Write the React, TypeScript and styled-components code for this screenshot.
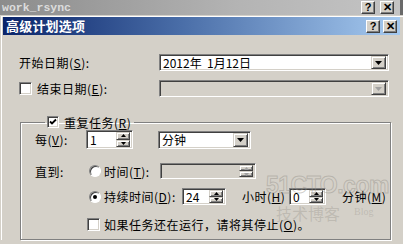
import styled, { createGlobalStyle } from "styled-components";

const GlobalStyle = createGlobalStyle`
    html, body {
        margin: 0;
        padding: 0;
        width: 403px;
        height: 244px;
        overflow: hidden;
        background: #d4d0c8;
    }
    * {
        box-sizing: border-box;
    }
`;

const Screen = styled.div`
    position: relative;
    width: 403px;
    height: 244px;
    overflow: hidden;
    background: #d4d0c8;
    font-family: "Noto Sans CJK SC", "Noto Sans", sans-serif;
    font-size: 12px;
    color: #000;
`;

const BackTitle = styled.div`
    height: 15px;
    display: flex;
    align-items: center;
    padding: 0 6px 0 2px;
    background: linear-gradient(to right, #8c8c8c, #b4b4b4 60%, #c4c4c4);
    border-right: 3px solid #6a6a6a;
`;

const BackTitleText = styled.span`
    flex: 1;
    font-family: "Liberation Mono", "DejaVu Sans Mono", monospace;
    font-weight: bold;
    font-size: 11.5px;
    color: #dcdcdc;
    line-height: 15px;
`;

const Dialog = styled.div`
    border-top: 1px solid #d4d0c8;
    border-left: 1px solid #d4d0c8;
    box-shadow: inset 1px 1px #ffffff;
    padding: 1px 3px 0 2px;
`;

const TitleBar = styled.div`
    height: 18px;
    display: flex;
    align-items: center;
    padding: 0 3px 0 3px;
    background: linear-gradient(to right, #0a246a, #4a6ea8 45%, #a6caf0);
`;

const TitleText = styled.span`
    flex: 1;
    color: #fff;
    font-weight: bold;
    font-size: 13px;
    line-height: 18px;
    letter-spacing: 0.2px;
`;

const CaptionButtons = styled.div<{ $gap: number }>`
    display: flex;
    gap: ${(p) => p.$gap}px;
`;

const CaptionButton = styled.div`
    width: 14px;
    height: 13px;
    display: flex;
    align-items: center;
    justify-content: center;
    background: #d4d0c8;
    border: 1px solid;
    border-color: #fff #404040 #404040 #fff;
    box-shadow: inset -1px -1px #808080;
    font-family: "Liberation Sans", sans-serif;
    font-weight: bold;
    font-size: 11px;
    line-height: 1;
`;

const Body = styled.div`
    padding: 19px 14px 0 16px;
`;

const Row = styled.div<{ $h: number; $mt?: number }>`
    display: flex;
    align-items: center;
    height: ${(p) => p.$h}px;
    margin-top: ${(p) => p.$mt ?? 0}px;
`;

const Label = styled.span<{ $w?: number }>`
    display: inline-block;
    width: ${(p) => (p.$w ? `${p.$w}px` : "auto")};
    flex-shrink: 0;
    letter-spacing: 0.5px;
    white-space: nowrap;
`;

const Key = styled.span`
    text-decoration: underline;
`;

const Sunken = styled.div<{ $w: number; $h: number; $disabled?: boolean }>`
    width: ${(p) => p.$w}px;
    height: ${(p) => p.$h}px;
    flex-shrink: 0;
    display: flex;
    align-items: center;
    background: ${(p) => (p.$disabled ? "#d4d0c8" : "#fff")};
    border: 1px solid;
    border-color: #808080 #fff #fff #808080;
    box-shadow: inset 1px 1px #404040, inset -1px -1px #d4d0c8;
    padding: 0 2px 0 3px;
`;

const FieldText = styled.span`
    flex: 1;
    line-height: 1;
    font-size: 12px;
    white-space: pre;
`;

const DropButton = styled.div<{ $disabled?: boolean }>`
    width: 15px;
    height: calc(100% - 2px);
    display: flex;
    align-items: center;
    justify-content: center;
    background: #d4d0c8;
    border: 1px solid;
    border-color: #d4d0c8 #404040 #404040 #d4d0c8;
    box-shadow: inset 1px 1px #fff, inset -1px -1px #808080;
    color: ${(p) => (p.$disabled ? "#a0a0a0" : "#000")};
`;

const SpinStack = styled.div`
    display: flex;
    flex-direction: column;
    width: 14px;
    height: calc(100% - 2px);
`;

const SpinHalf = styled.div<{ $disabled?: boolean }>`
    flex: 1;
    display: flex;
    align-items: center;
    justify-content: center;
    background: #d4d0c8;
    border: 1px solid;
    border-color: #d4d0c8 #404040 #404040 #d4d0c8;
    box-shadow: inset 1px 1px #fff, inset -1px -1px #808080;
    color: ${(p) => (p.$disabled ? "#a0a0a0" : "#000")};
`;

const CheckBox = styled.div<{ $size: number }>`
    width: ${(p) => p.$size}px;
    height: ${(p) => p.$size}px;
    flex-shrink: 0;
    display: flex;
    align-items: center;
    justify-content: center;
    background: #fff;
    border: 1px solid;
    border-color: #808080 #fff #fff #808080;
    box-shadow: inset 1px 1px #404040, inset -1px -1px #d4d0c8;
`;

const Radio = styled.div`
    width: 12px;
    height: 12px;
    flex-shrink: 0;
    border-radius: 50%;
    background: #fff;
    border: 1px solid;
    border-color: #808080 #fff #fff #808080;
    box-shadow: inset 1px 1px #404040;
    display: flex;
    align-items: center;
    justify-content: center;
`;

const RadioDot = styled.div`
    width: 4px;
    height: 4px;
    border-radius: 50%;
    background: #000;
`;

const Group = styled.fieldset`
    margin: 18px 0 0 1px;
    width: 371px;
    height: 125px;
    padding: 0 0 0 14px;
    border: 1px solid #808080;
    box-shadow: 1px 1px #fff, inset 1px 1px #fff;
`;

const Legend = styled.legend`
    display: flex;
    align-items: center;
    gap: 5px;
    margin-left: 10px;
    padding: 0 3px 0 2px;
    height: 14px;
`;

const Gap = styled.span<{ $w: number }>`
    display: inline-block;
    width: ${(p) => p.$w}px;
    flex-shrink: 0;
`;

const Watermark = styled.div`
    position: absolute;
    left: 266px;
    top: 172px;
    width: 128px;
    pointer-events: none;
    color: rgba(150, 146, 138, 0.35);
`;

const WmBig = styled.div`
    font-family: "Liberation Sans", sans-serif;
    font-size: 23px;
    font-weight: bold;
    letter-spacing: -0.5px;
    line-height: 26px;
    color: transparent;
    -webkit-text-stroke: 1px rgba(150, 146, 138, 0.45);
    white-space: nowrap;
`;

const WmSmall = styled.div`
    display: flex;
    align-items: flex-start;
    gap: 14px;
    margin: 6px 0 0 10px;
    font-family: "Noto Sans CJK SC", sans-serif;
    font-size: 16px;
    line-height: 18px;
    white-space: nowrap;
`;

const WmBlog = styled.span`
    font-family: "Liberation Serif", serif;
    font-size: 10px;
    line-height: 12px;
    margin-top: 2px;
`;

const Down = () => (
    <svg width={7} height={4} viewBox="0 0 7 4">
        <path d="M0 0h7L3.5 4z" fill="currentColor" />
    </svg>
);

const Up = () => (
    <svg width={5} height={3} viewBox="0 0 5 3">
        <path d="M0 3h5L2.5 0z" fill="currentColor" />
    </svg>
);

const SmallDown = () => (
    <svg width={5} height={3} viewBox="0 0 5 3">
        <path d="M0 0h5L2.5 3z" fill="currentColor" />
    </svg>
);

const Tick = () => (
    <svg width={8} height={8} viewBox="0 0 8 8">
        <path d="M1 3.5l2 2L7 1.5" stroke="#000" strokeWidth={1.8} fill="none" />
    </svg>
);

const Combo = ({ w, h, value, disabled }: { w: number; h: number; value?: string; disabled?: boolean }) => (
    <Sunken $w={w} $h={h} $disabled={disabled}>
        <FieldText>{value}</FieldText>
        <DropButton $disabled={disabled}>
            <Down />
        </DropButton>
    </Sunken>
);

const Spin = ({ w, h, value, disabled }: { w: number; h: number; value?: string; disabled?: boolean }) => (
    <Sunken $w={w} $h={h} $disabled={disabled}>
        <FieldText>{value}</FieldText>
        <SpinStack>
            <SpinHalf $disabled={disabled}>
                <Up />
            </SpinHalf>
            <SpinHalf $disabled={disabled}>
                <SmallDown />
            </SpinHalf>
        </SpinStack>
    </Sunken>
);

const App = () => {
    return (
        <Screen>
            <GlobalStyle />
            <BackTitle>
                <BackTitleText>work_rsync</BackTitleText>
                <CaptionButtons $gap={5}>
                    <CaptionButton>?</CaptionButton>
                    <CaptionButton>✕</CaptionButton>
                </CaptionButtons>
            </BackTitle>
            <Dialog>
                <TitleBar>
                    <TitleText>高级计划选项</TitleText>
                    <CaptionButtons $gap={3}>
                        <CaptionButton>?</CaptionButton>
                        <CaptionButton>✕</CaptionButton>
                    </CaptionButtons>
                </TitleBar>
                <Body>
                    <Row $h={17}>
                        <Label $w={140}>
                            开始日期(<Key>S</Key>):
                        </Label>
                        <Combo w={230} h={17} value="2012年  1月12日" />
                    </Row>
                    <Row $h={17} $mt={9}>
                        <CheckBox $size={13} />
                        <Gap $w={5} />
                        <Label $w={122}>
                            结束日期(<Key>E</Key>):
                        </Label>
                        <Combo w={230} h={17} disabled />
                    </Row>
                    <Group>
                        <Legend>
                            <CheckBox $size={12}>
                                <Tick />
                            </CheckBox>
                            <Label>
                                重复任务(<Key>R</Key>)
                            </Label>
                        </Legend>
                        <Row $h={19} $mt={1}>
                            <Label $w={51}>
                                每(<Key>V</Key>):
                            </Label>
                            <Spin w={47} h={19} value="1" />
                            <Gap $w={25} />
                            <Combo w={93} h={18} value="分钟" />
                        </Row>
                        <Row $h={16} $mt={14}>
                            <Label $w={54}>直到:</Label>
                            <Radio />
                            <Gap $w={3} />
                            <Label $w={56}>
                                时间(<Key>T</Key>):
                            </Label>
                            <Spin w={96} h={16} disabled />
                        </Row>
                        <Row $h={17} $mt={9}>
                            <Gap $w={54} />
                            <Radio>
                                <RadioDot />
                            </Radio>
                            <Gap $w={3} />
                            <Label $w={78}>
                                持续时间(<Key>D</Key>):
                            </Label>
                            <Spin w={44} h={17} value="24" />
                            <Gap $w={16} />
                            <Label $w={47}>
                                小时(<Key>H</Key>)
                            </Label>
                            <Spin w={37} h={17} value="0" />
                            <Gap $w={16} />
                            <Label>
                                分钟(<Key>M</Key>)
                            </Label>
                        </Row>
                        <Row $h={13} $mt={13}>
                            <Gap $w={52} />
                            <CheckBox $size={13} />
                            <Gap $w={4} />
                            <Label>
                                如果任务还在运行，请将其停止(<Key>O</Key>)。
                            </Label>
                        </Row>
                    </Group>
                </Body>
            </Dialog>
            <Watermark>
                <WmBig>51CTO.com</WmBig>
                <WmSmall>
                    <span>技术博客</span>
                    <WmBlog>Blog</WmBlog>
                </WmSmall>
            </Watermark>
        </Screen>
    );
};

export default App;
